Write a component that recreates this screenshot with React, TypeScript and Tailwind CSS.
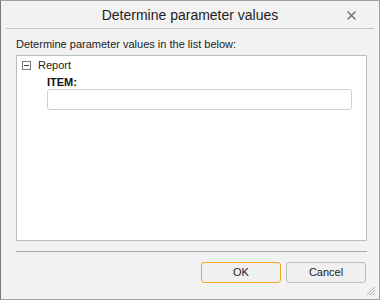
import React from "react";

export default function App() {
  return (
    <div className="w-[380px] h-[300px] bg-[#f2f2f2] border border-[#a0a0a0] border-l-[#7a7a7a] relative flex flex-col" style={{ fontFamily: '"Liberation Sans", Arial, sans-serif' }}>
      <div className="h-[28px] flex items-center justify-center relative mx-[5px] border-b border-[#c6c6c6]">
        <span className="text-[14px] text-[#1e1e1e] mt-[2px]">Determine parameter values</span>
        <svg className="absolute right-[18px] top-[10px]" width="9" height="9" viewBox="0 0 9 9">
          <path d="M0.5 0.5 L8.5 8.5 M8.5 0.5 L0.5 8.5" stroke="#6a6a6a" strokeWidth="1.3" />
        </svg>
      </div>
      <div className="pl-[15px] pr-[12px] flex flex-col flex-1">
        <div className="text-[11px] text-[#222] mt-[9px] leading-[13px]">Determine parameter values in the list below:</div>
        <div className="mt-[4px] h-[186px] bg-white border border-[#bcbcbc] pl-[5px] pt-[3px] pr-[14px]">
          <div className="flex items-center h-[13px]">
            <div className="w-[9px] h-[9px] border border-[#7a7a7a] flex items-center justify-center">
              <div className="w-[5px] h-[1px] bg-[#444]" />
            </div>
            <span className="ml-[7px] text-[11px] text-[#222]">Report</span>
          </div>
          <div className="ml-[25px] mt-[4px] text-[11px] font-bold text-[#111] leading-[13px]">ITEM:</div>
          <div className="ml-[25px] h-[21px] border border-[#d0d0d0] rounded-[3px] bg-white" />
        </div>
        <div className="mt-[10px] border-t border-[#a8a8a8]" />
        <div className="flex justify-end gap-[5px] mt-[10px] pr-[1px]">
          <button className="w-[80px] h-[21px] rounded-[3px] border border-[#f5a623] bg-[#f0f0f0] text-[11px] text-[#222]">OK</button>
          <button className="w-[80px] h-[21px] rounded-[3px] border border-[#bdbdbd] bg-[#f0f0f0] text-[11px] text-[#222]">Cancel</button>
        </div>
      </div>
      <svg className="absolute right-[3px] bottom-[3px]" width="10" height="10" viewBox="0 0 10 10">
        <path d="M9 1 L1 9 M9 4 L4 9 M9 7 L7 9" stroke="#b0b0b0" strokeWidth="1" />
      </svg>
    </div>
  );
}
